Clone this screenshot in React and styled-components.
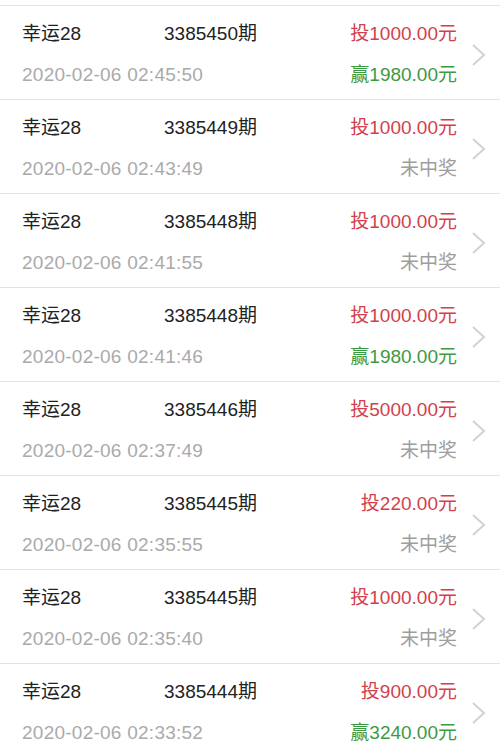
import React from "react"
import styled, { createGlobalStyle } from "styled-components"

const Global = createGlobalStyle`
  html, body {
    margin: 0;
    padding: 0;
    background: #fff;
  }
  body {
    font-family: "Liberation Sans", "Noto Sans CJK SC", sans-serif;
  }
`

const List = styled.div`
  padding-top: 5px;
  background: #fff;
`

const Row = styled.div`
  display: grid;
  grid-template-columns: 142px 1fr auto 43px;
  grid-template-rows: 28px 28px;
  row-gap: 13px;
  align-items: center;
  height: 94px;
  box-sizing: border-box;
  padding: 14px 0 0 22px;
  border-top: 1px solid #e3e3e3;
  font-size: 19px;
  line-height: 28px;
`

const Game = styled.div`
  color: #222;
`

const Issue = styled.div`
  color: #222;
`

const Stake = styled.div`
  color: #d2414b;
  text-align: right;
`

const Date = styled.div`
  grid-column: 1 / 3;
  color: #aaa;
  letter-spacing: 0.25px;
`

const Result = styled.div`
  grid-column: 3;
  text-align: right;
  color: ${(p) => (p.$win ? "#3d9a42" : "#9e9e9e")};
`

const Arrow = styled.div`
  grid-column: 4;
  grid-row: 1 / 3;
  display: flex;
  justify-content: flex-end;
  padding-right: 13px;
  svg {
    display: block;
  }
`

const records = [
  { issue: "3385450", stake: "1000.00", date: "2020-02-06 02:45:50", win: "1980.00" },
  { issue: "3385449", stake: "1000.00", date: "2020-02-06 02:43:49" },
  { issue: "3385448", stake: "1000.00", date: "2020-02-06 02:41:55" },
  { issue: "3385448", stake: "1000.00", date: "2020-02-06 02:41:46", win: "1980.00" },
  { issue: "3385446", stake: "5000.00", date: "2020-02-06 02:37:49" },
  { issue: "3385445", stake: "220.00", date: "2020-02-06 02:35:55" },
  { issue: "3385445", stake: "1000.00", date: "2020-02-06 02:35:40" },
  { issue: "3385444", stake: "900.00", date: "2020-02-06 02:33:52", win: "3240.00" },
]

const Chevron = () => (
  <svg width="16" height="24" viewBox="0 0 16 24">
    <path d="M2 2 L13 12 L2 22" fill="none" stroke="#d2d2d2" strokeWidth="2" />
  </svg>
)

export default function App() {
  return (
    <>
      <Global />
      <List>
        {records.map((r, i) => (
          <Row key={i}>
            <Game>幸运28</Game>
            <Issue>{r.issue}期</Issue>
            <Stake>投{r.stake}元</Stake>
            <Arrow>
              <Chevron />
            </Arrow>
            <Date>{r.date}</Date>
            <Result $win={!!r.win}>{r.win ? `赢${r.win}元` : "未中奖"}</Result>
          </Row>
        ))}
      </List>
    </>
  )
}
